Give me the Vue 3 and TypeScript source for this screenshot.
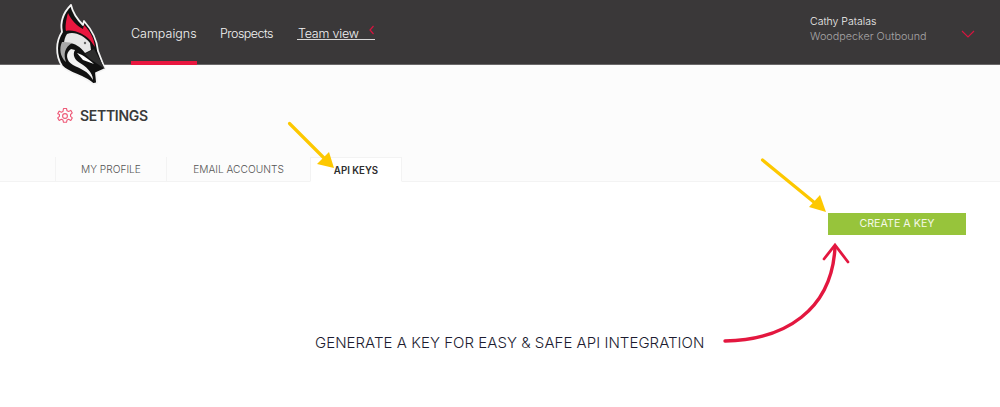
<script setup lang="ts">
const navItems: string[] = ['Campaigns', 'Prospects']
const tabs: { label: string; active: boolean }[] = [
  { label: 'MY PROFILE', active: false },
  { label: 'EMAIL ACCOUNTS', active: false },
  { label: 'API KEYS', active: true },
]
</script>

<template>
  <div class="page">
    <header class="topbar">
      <nav class="nav">
        <a
          v-for="(item, i) in navItems"
          :key="item"
          class="nav-item"
          :class="{ current: i === 0 }"
        >{{ item }}</a>
        <a class="nav-more">
          <span>Team view</span>
          <svg class="more-chevron" width="6" height="10" viewBox="0 0 6 10">
            <path d="M4.500 1 L1 5 L4.500 9" fill="none" stroke="#d8143f" stroke-width="1.200" />
          </svg>
        </a>
      </nav>
      <div class="user">
        <div class="user-text">
          <div class="user-name">Cathy Patalas</div>
          <div class="user-org">Woodpecker Outbound</div>
        </div>
        <svg class="user-chevron" width="14" height="8" viewBox="0 0 14 8">
          <path d="M1 1 L7 7 L13 1" fill="none" stroke="#d8143f" stroke-width="1.100" />
        </svg>
      </div>
    </header>

    <section class="settings-head">
      <h1 class="title">
        <svg class="gear" width="18" height="18" viewBox="0 0 24 24" fill="none" stroke="#ee5a78" stroke-width="1.500" stroke-linejoin="round">
          <circle cx="12" cy="12" r="3.200" />
          <path d="M10 2h4l.7 3 2.200 1 2.800-1.500 2 3.400-2.300 2.100v2.400l2.300 2.100-2 3.400-2.800-1.500-2.200 1-.7 3h-4l-.7-3-2.200-1-2.800 1.500-2-3.400 2.300-2.100v-2.400L2.300 8.900l2-3.400 2.800 1.500 2.200-1z" />
        </svg>
        <span>SETTINGS</span>
      </h1>
      <div class="tabs">
        <div
          v-for="tab in tabs"
          :key="tab.label"
          class="tab"
          :class="{ active: tab.active }"
        >{{ tab.label }}</div>
      </div>
    </section>

    <main class="content">
      <div class="actions">
        <button class="create" type="button">CREATE A KEY</button>
      </div>
      <p class="caption">GENERATE A KEY FOR EASY &amp; SAFE API INTEGRATION</p>
    </main>

    <!-- Logo overlapping the header edge -->
    <svg class="logo" width="60" height="90" viewBox="50 0 60 90">
      <path d="M71 5 C64 12 60 22 62 32 C56 41 55 55 62 66 C69 74 84 75 93 84 L97 83 L96 73 L105 69 L98 51 C97 40 92 30 84 21 L83 25 C78 20 73 14 71 5Z" fill="#111" stroke="#f4f4f4" stroke-width="1.800" stroke-linejoin="round" />
      <path d="M68 13 C66 20 65 27 66 31 C74 29 84 34 90 40 L95 47 C94 38 90 31 84 25 L83 29 C77 26 71 20 68 13Z" fill="#e8173f" />
      <path d="M67 34 C75 31 84 36 90 43 L91 50 L85 53 C79 45 71 41 64 44 C64 40 65 37 67 34Z" fill="#e6e6e6" />
      <path d="M62 42 C59 48 60 57 66 62 C63 54 65 47 72 43 C69 42 65 42 62 42Z" fill="#a8a8a8" />
      <path d="M71 49 C65 53 66 61 73 65 C81 69 88 71 93 80 C93 72 85 66 80 63 C75 60 72 55 75 50Z" fill="#f2f2f2" />
      <path d="M85 54 L94 49 L105 69 L90 59Z" fill="#2e2e2e" />
      <path d="M77 53 C81 54 86 57 94 64 L83 60Z" fill="#fff" />
      <circle cx="85" cy="43" r="1.200" fill="#666" />
    </svg>

    <!-- Annotation arrows drawn on top of the screenshot -->
    <svg class="annotations" width="1000" height="407" viewBox="0 0 1000 407">
      <path d="M289.500 123.500 L325 159" stroke="#fdc800" stroke-width="3.200" fill="none" stroke-linecap="round" />
      <path d="M334 168 L317 164 L329 152Z" fill="#fdc800" />
      <path d="M762.500 160 L815 203" stroke="#fdc800" stroke-width="3.200" fill="none" stroke-linecap="round" />
      <path d="M826 212 L809 207 L820 195Z" fill="#fdc800" />
      <path d="M725 341 C785 340 832 310 835 247" stroke="#e3173f" stroke-width="3.400" fill="none" stroke-linecap="round" />
      <path d="M824 259 L835 245 L848 262" stroke="#e3173f" stroke-width="2.800" fill="none" stroke-linecap="round" />
    </svg>
  </div>
</template>

<style>
html, body { margin: 0; background: #fff; }
</style>

<style scoped>
.page {
  position: relative;
  width: 1000px;
  height: 407px;
  overflow: hidden;
  font-family: Inter, "Open Sans", sans-serif;
  font-weight: 300;
  color: #333;
  background: #fff;
}
.topbar {
  height: 65px;
  box-sizing: border-box;
  background: #3a3839;
  border-bottom: 1px solid #6a6869;
  display: flex;
  justify-content: space-between;
  padding-left: 131px;
  padding-right: 25px;
}
.nav { display: flex; align-items: stretch; gap: 23px; }
.nav-item {
  display: block;
  height: 64px;
  box-sizing: border-box;
  padding-top: 26px;
  font-size: 12.5px;
  line-height: 16px;
  letter-spacing: -0.55px;
  color: #f2f2f2;
}
.nav-item.current { border-bottom: 4px solid #e8173f; height: 65px; width: 66px; letter-spacing: 0; }
.nav-more {
  position: relative;
  display: block;
  margin: 26px 0 0 1px;
  width: 78px;
  height: 13px;
  border-bottom: 1px solid #d8d8d8;
  font-size: 12.5px;
  line-height: 16px;
  letter-spacing: -0.2px;
  color: #f2f2f2;
}
.nav-more span { margin-left: 1px; }
.more-chevron { position: absolute; right: 0; top: -1px; }
.user { display: flex; align-items: flex-start; gap: 23px; padding-top: 15px; }
.user-text { width: 128px; }
.user-name { font-size: 10.5px; line-height: 14px; color: #f0f0f0; }
.user-org { font-size: 10.8px; line-height: 16px; color: #a8a6a7; }
.user-chevron { margin-top: 15px; }
.settings-head {
  height: 117px;
  background: #fcfcfc;
  border-bottom: 1px solid #f3f3f3;
  box-sizing: border-box;
  padding: 42px 0 0 55px;
  display: flex;
  flex-direction: column;
  justify-content: space-between;
}
.title {
  margin: 0 0 0 1px;
  display: flex;
  align-items: center;
  gap: 6px;
  font-size: 14px;
  letter-spacing: -0.3px;
  line-height: 18px;
  font-weight: 600;
  color: #3a3a3a;
}
.gear { display: block; }
.tabs { display: flex; height: 24px; }
.tab {
  box-sizing: border-box;
  font-size: 10.2px;
  line-height: 23px;
  padding-top: 1px;
  text-align: center;
  color: #555;
  border-left: 1px solid #f3f3f3;
}
.tab:nth-child(1) { width: 111px; }
.tab:nth-child(2) { width: 144px; }
.tab:nth-child(3) { width: 92px; }
.tab.active {
  background: #fff;
  border: 1px solid #f3f3f3;
  border-bottom: 1px solid #fff;
  color: #2e2e2e;
  font-weight: 600;
  font-size: 9.7px;
  line-height: 24px;
  height: 25px;
}
.content { padding-top: 31px; }
.actions { display: flex; justify-content: flex-end; padding-right: 34px; }
.create {
  width: 138px;
  height: 22px;
  padding: 0;
  border: 0;
  background: #97c43b;
  color: #f4f8e8;
  font-family: inherit;
  font-weight: 400;
  font-size: 10.7px;
  line-height: 22px;
}
.caption {
  margin: 98px 0 0 315px;
  font-size: 15px;
  letter-spacing: 0.04px;
  line-height: 20px;
  color: #1c1c30;
  white-space: nowrap;
}
.logo { position: absolute; left: 50px; top: 0; }
.annotations { position: absolute; left: 0; top: 0; pointer-events: none; }
</style>
